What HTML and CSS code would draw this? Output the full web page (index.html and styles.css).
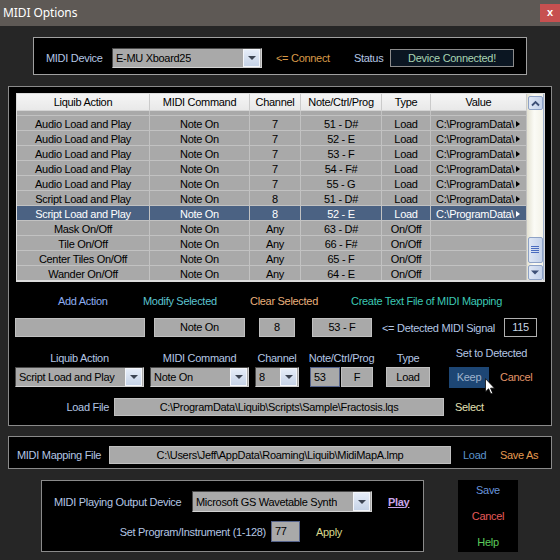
FILE: index.html
```html
<!DOCTYPE html>
<html>
<head>
<meta charset="utf-8">
<title>MIDI Options</title>
<link rel="stylesheet" href="styles.css">
</head>
<body>
<div class="titlebar"><span class="title">MIDI Options</span><span class="close">x</span></div>

<div class="device-panel">
  <span class="dev-lbl">MIDI Device</span>
  <div class="select dev-select"><span>E-MU Xboard25</span><span class="dd"></span></div>
  <span class="connect">&lt;= Connect</span>
  <span class="status-lbl">Status</span>
  <div class="status-box">Device Connected!</div>
</div>

<div class="main-panel">
  <div class="grid">
    <div class="grid-data">
      <div class="row head">
        <div>Liquib Action</div><div>MIDI Command</div><div>Channel</div><div>Note/Ctrl/Prog</div><div>Type</div><div>Value</div>
      </div>
      <div class="rows">
        <div class="row strip"><div></div><div></div><div></div><div></div><div></div><div></div></div>
        <div class="row"><div>Audio Load and Play</div><div>Note On</div><div>7</div><div>51 - D#</div><div>Load</div><div class="val"><span>C:\ProgramData\</span><i class="tri"></i></div></div>
        <div class="row"><div>Audio Load and Play</div><div>Note On</div><div>7</div><div>52 - E</div><div>Load</div><div class="val"><span>C:\ProgramData\</span><i class="tri"></i></div></div>
        <div class="row"><div>Audio Load and Play</div><div>Note On</div><div>7</div><div>53 - F</div><div>Load</div><div class="val"><span>C:\ProgramData\</span><i class="tri"></i></div></div>
        <div class="row"><div>Audio Load and Play</div><div>Note On</div><div>7</div><div>54 - F#</div><div>Load</div><div class="val"><span>C:\ProgramData\</span><i class="tri"></i></div></div>
        <div class="row"><div>Audio Load and Play</div><div>Note On</div><div>7</div><div>55 - G</div><div>Load</div><div class="val"><span>C:\ProgramData\</span><i class="tri"></i></div></div>
        <div class="row"><div>Script Load and Play</div><div>Note On</div><div>8</div><div>51 - D#</div><div>Load</div><div class="val"><span>C:\ProgramData\</span><i class="tri"></i></div></div>
        <div class="row sel"><div>Script Load and Play</div><div>Note On</div><div>8</div><div>52 - E</div><div>Load</div><div class="val"><span>C:\ProgramData\</span><i class="tri"></i></div></div>
        <div class="row"><div>Mask On/Off</div><div>Note On</div><div>Any</div><div>63 - D#</div><div>On/Off</div><div class="val"></div></div>
        <div class="row"><div>Tile On/Off</div><div>Note On</div><div>Any</div><div>66 - F#</div><div>On/Off</div><div class="val"></div></div>
        <div class="row"><div>Center Tiles On/Off</div><div>Note On</div><div>Any</div><div>65 - F</div><div>On/Off</div><div class="val"></div></div>
        <div class="row"><div>Wander On/Off</div><div>Note On</div><div>Any</div><div>64 - E</div><div>On/Off</div><div class="val"></div></div>
      </div>
    </div>
    <div class="vscroll">
      <div class="sb-btn sb-up"><svg width="9" height="7" viewBox="0 0 9 7"><polyline points="1,5.5 4.5,2 8,5.5" fill="none" stroke="#3d4f76" stroke-width="1.8"/></svg></div>
      <div class="sb-space"></div>
      <div class="sb-btn sb-thumb"><svg width="8" height="8" viewBox="0 0 8 8"><g stroke="#4a6cc0" stroke-width="1"><line x1="0" y1="0.5" x2="8" y2="0.5"/><line x1="0" y1="2.5" x2="8" y2="2.5"/><line x1="0" y1="4.5" x2="8" y2="4.5"/><line x1="0" y1="6.5" x2="8" y2="6.5"/></g></svg></div>
      <div class="sb-btn sb-down"><svg width="8" height="5" viewBox="0 0 8 5"><polygon points="0,0.5 8,0.5 4,4.5" fill="#3d4f76"/></svg></div>
    </div>
  </div>

  <div class="links">
    <span class="lk lk-add">Add Action</span>
    <span class="lk lk-mod">Modify Selected</span>
    <span class="lk lk-clr">Clear Selected</span>
    <span class="lk lk-txt">Create Text File of MIDI Mapping</span>
  </div>

  <div class="detect">
    <div class="box b1"></div>
    <div class="box b2">Note On</div>
    <div class="box b3">8</div>
    <div class="box b4">53 - F</div>
    <span class="det-lbl">&lt;= Detected MIDI Signal</span>
    <div class="sig">115</div>
  </div>

  <div class="controls">
    <div class="grp g1"><span class="glbl">Liquib Action</span><div class="select s1"><span>Script Load and Play</span><span class="dd"></span></div></div>
    <div class="grp g2"><span class="glbl">MIDI Command</span><div class="select s2"><span>Note On</span><span class="dd"></span></div></div>
    <div class="grp g3"><span class="glbl">Channel</span><div class="select s3"><span>8</span><span class="dd"></span></div></div>
    <div class="grp g4"><span class="glbl">Note/Ctrl/Prog</span><div class="pair"><div class="inp i53">53</div><div class="box bF">F</div></div></div>
    <div class="grp g5"><span class="glbl">Type</span><div class="box bLoad">Load</div></div>
    <div class="grp g6"><span class="glbl glbl-det">Set to Detected</span><div class="pair"><div class="keep">Keep</div><span class="cancel-lk">Cancel</span></div></div>
  </div>

  <div class="loadrow">
    <span class="lf-lbl">Load File</span>
    <div class="box lf-box">C:\ProgramData\Liquib\Scripts\Sample\Fractosis.lqs</div>
    <span class="select-lk">Select</span>
  </div>
</div>

<div class="map-panel">
  <span class="map-lbl">MIDI Mapping File</span>
  <div class="box map-box">C:\Users\Jeff\AppData\Roaming\Liquib\MidiMapA.lmp</div>
  <span class="map-load">Load</span>
  <span class="map-save">Save As</span>
</div>

<div class="bottom">
  <div class="play-panel">
    <div class="play-row1">
      <span class="out-lbl">MIDI Playing Output Device</span>
      <div class="select s-out"><span>Microsoft GS Wavetable Synth</span><span class="dd"></span></div>
      <span class="play-lk">Play</span>
    </div>
    <div class="play-row2">
      <span class="prog-lbl">Set Program/Instrument (1-128)</span>
      <div class="inp i77">77</div>
      <span class="apply-lk">Apply</span>
    </div>
  </div>
  <div class="save-panel">
    <span class="sv">Save</span>
    <span class="cn">Cancel</span>
    <span class="hp">Help</span>
  </div>
</div>

<svg class="cursor" width="10" height="17" viewBox="0 0 12 20"><path d="M0.5 0.5 L0.5 16.5 L4.3 12.8 L7 19 L9.3 18 L6.7 12 L11.5 12 Z" fill="#fff" stroke="#000" stroke-width="1" stroke-linejoin="round"/></svg>
</body>
</html>
```

FILE: styles.css
```css
* { box-sizing: border-box; }
html, body { margin: 0; padding: 0; }
body {
  width: 560px;
  height: 560px;
  background: #262626;
  font-family: "Liberation Sans", Arial, sans-serif;
  font-size: 11px;
  letter-spacing: -0.3px;
  color: #b4c6e4;
  overflow: hidden;
  position: relative;
}
span { white-space: nowrap; }

/* title bar */
.titlebar {
  height: 26px;
  background: #5e5955;
  display: flex;
  justify-content: space-between;
  align-items: flex-start;
}
.title {
  font-family: "Noto Sans", "Open Sans", sans-serif;
  font-size: 12px;
  letter-spacing: -0.1px;
  color: #ffffff;
  line-height: 25px;
  padding-left: 3px;
}
.close {
  margin-top: 4px;
  width: 20px;
  height: 18px;
  background: #c75050;
  color: #ffffff;
  font-weight: bold;
  font-size: 11px;
  line-height: 16px;
  text-align: center;
  letter-spacing: 0;
}

/* device panel */
.device-panel {
  margin: 11px 0 0 33px;
  width: 494px;
  height: 38px;
  background: #000;
  border: 1px solid #a0a0a0;
  display: flex;
  align-items: center;
  padding: 4px 0 0 12px;
}
.dev-lbl { width: 66px; }
.select {
  display: flex;
  align-items: center;
  justify-content: space-between;
  background: #a9a9a9;
  border: 1px solid;
  border-color: #4a4a4a #d2d2d2 #d2d2d2 #4a4a4a;
  color: #000;
  height: 20px;
  padding: 0 1px 0 3px;
  overflow: hidden;
}
.select > span:first-child { overflow: hidden; }
.dd {
  flex: none;
  width: 17px;
  height: 18px;
  border: 1px solid #f4f6fa;
  background: linear-gradient(#e6edf8, #c6d3e7);
  display: flex;
  align-items: center;
  justify-content: center;
}
.dd::after {
  content: "";
  width: 0;
  height: 0;
  border-left: 4px solid transparent;
  border-right: 4px solid transparent;
  border-top: 4px solid #3c4452;
}
.dev-select { width: 150px; }
.connect { margin-left: 14px; width: 78px; color: #d99a48; }
.status-lbl { width: 36px; }
.status-box {
  width: 124px;
  height: 18px;
  background: #0b1622;
  border: 1px solid #8c8c8c;
  color: #a8d4b2;
  text-align: center;
  line-height: 16px;
}

/* main panel */
.main-panel {
  margin: 11px 0 0 8px;
  width: 544px;
  height: 340px;
  background: #000;
  border: 1px solid #8a8a8a;
}
.grid {
  margin: 6px 0 0 7px;
  width: 529px;
  height: 189px;
  border: 1px solid #dcdcdc;
  border-bottom-width: 2px;
  display: flex;
  background: #a9a9a9;
}
.grid-data { width: 510px; display: flex; flex-direction: column; }
.row {
  display: grid;
  grid-template-columns: 133px 100px 51px 81px 49px 96px;
  height: 15px;
}
.row > div {
  border-right: 1px solid #c2c2c2;
  border-bottom: 1px solid #c2c2c2;
  text-align: center;
  padding-top: 1px;
  line-height: 14px;
  color: #000;
  white-space: nowrap;
  overflow: hidden;
}
.head {
  height: 17px;
  background: linear-gradient(#f5f5f5, #e8e8e8);
}
.head > div {
  padding-top: 0;
  line-height: 16px;
  border-right: 1px solid #cbcbcb;
  border-bottom: 1px solid #d4d4d4;
}
.rows { height: 169px; overflow: hidden; }
.row.strip { height: 5px; }
.row.sel { background: #4b6283; }
.row.sel > div { color: #ffffff; }
.row > div.val { display: flex; align-items: center; text-align: left; }
.val span { flex: 1; padding-left: 5px; }
.tri {
  flex: none;
  width: 0;
  height: 0;
  border-left: 4px solid #000;
  border-top: 3px solid transparent;
  border-bottom: 3px solid transparent;
  margin-right: 6px;
}
.sel .tri { border-left-color: #ffffff; }

/* scrollbar */
.vscroll {
  width: 17px;
  display: flex;
  flex-direction: column;
  align-items: center;
  background: linear-gradient(90deg, #e4e2d2, #fbfbf6 45%, #f3f2e8);
  border-right: 1px solid #9fb0cc;
}
.sb-btn {
  width: 15px;
  border: 1px solid #8ea2c6;
  border-radius: 2px;
  background: linear-gradient(90deg, #dfe7f5, #c3d1ea);
  display: flex;
  align-items: center;
  justify-content: center;
}
.sb-btn svg { display: block; }
.sb-up { height: 14px; margin-top: 2px; }
.sb-space { flex: 1; }
.sb-thumb { height: 26px; margin-bottom: 2px; }
.sb-down { height: 15px; }

/* action links */
.links {
  display: flex;
  margin-top: 12px;
  padding-left: 49px;
  height: 14px;
  line-height: 14px;
}
.lk-add { width: 85px; color: #8cacf0; }
.lk-mod { width: 107px; color: #5cc4d0; }
.lk-clr { width: 101px; color: #e8b07c; }
.lk-txt { color: #3cc8b4; }

/* detected row */
.detect {
  display: flex;
  align-items: center;
  margin-top: 10px;
  height: 19px;
  padding-left: 6px;
}
.box {
  height: 19px;
  background: #a9a9a9;
  border: 1px solid #c0c0c0;
  color: #000;
  text-align: center;
  line-height: 17px;
  white-space: nowrap;
  overflow: hidden;
}
.b1 { width: 130px; }
.b2 { width: 91px; margin-left: 9px; }
.b3 { width: 36px; margin-left: 14px; }
.b4 { width: 60px; margin-left: 17px; }
.det-lbl { width: 122px; margin-left: 10px; }
.sig {
  width: 33px;
  height: 19px;
  border: 1px solid #b0b0b0;
  color: #c8d4e4;
  text-align: center;
  line-height: 17px;
}

/* control row */
.controls {
  display: flex;
  align-items: flex-end;
  margin-top: 9px;
  padding-left: 6px;
}
.grp { display: flex; flex-direction: column; align-items: center; }
.glbl { height: 14px; line-height: 14px; margin-bottom: 2px; }
.glbl-det { margin-bottom: 7px; }
.g1 { width: 129px; }
.g2 { width: 99px; margin-left: 6px; }
.g3 { width: 44px; margin-left: 6px; }
.g4 { width: 63px; margin-left: 11px; }
.g5 { width: 44px; margin-left: 13px; }
.g6 { width: 85px; margin-left: 19px; }
.grp .select { width: 100%; }
.pair { display: flex; align-items: center; width: 100%; height: 20px; }
.inp {
  height: 20px;
  background: #a9a9a9;
  border: 1px solid #56648c;
  color: #000;
  padding-left: 3px;
  line-height: 18px;
}
.i53 { width: 30px; }
.bF { width: 32px; height: 20px; line-height: 18px; margin-left: 1px; }
.bLoad { width: 44px; height: 20px; line-height: 18px; }
.keep {
  width: 40px;
  height: 21px;
  background: #1d4674;
  color: #9fb3cc;
  text-align: center;
  line-height: 21px;
}
.cancel-lk { margin-left: 11px; color: #e2956a; }

/* load file */
.loadrow {
  display: flex;
  align-items: center;
  margin-top: 11px;
  height: 18px;
}
.lf-lbl { width: 100px; text-align: right; }
.lf-box { width: 330px; height: 18px; line-height: 16px; margin-left: 5px; }
.select-lk { margin-left: 11px; color: #e4e0b4; }

/* mapping panel */
.map-panel {
  margin: 10px 0 0 8px;
  width: 544px;
  height: 33px;
  border: 1px solid #8a8a8a;
  background: #000;
  display: flex;
  align-items: center;
  padding: 5px 0 0 8px;
}
.map-lbl { width: 92px; }
.map-box { width: 342px; height: 18px; line-height: 16px; }
.map-load { margin-left: 12px; width: 37px; color: #5c94cc; }
.map-save { color: #e49a50; }

/* bottom */
.bottom { display: flex; margin-top: 11px; }
.play-panel {
  margin-left: 41px;
  width: 383px;
  height: 72px;
  border: 1px solid #8a8a8a;
  background: #000;
  padding: 10px 0 0 12px;
}
.play-row1 { display: flex; align-items: center; height: 21px; }
.out-lbl { width: 138px; }
.s-out { width: 180px; height: 21px; }
.s-out .dd { height: 19px; }
.play-lk {
  margin-left: 16px;
  color: #c8a4e8;
  font-weight: bold;
  text-decoration: underline;
}
.play-row2 { display: flex; align-items: center; margin-top: 9px; height: 21px; }
.prog-lbl { width: 212px; text-align: right; }
.i77 { width: 29px; height: 21px; line-height: 19px; margin-left: 5px; }
.apply-lk { margin-left: 16px; color: #d8d88c; }

.save-panel {
  margin-left: 34px;
  width: 60px;
  height: 72px;
  background: #000;
  display: flex;
  flex-direction: column;
  align-items: center;
  padding-top: 3px;
  gap: 12px;
}
.save-panel span { line-height: 14px; }
.sv { color: #6894dc; }
.cn { color: #e65a5a; }
.hp { color: #5ccc5c; }

.cursor { position: absolute; left: 485px; top: 378px; }
```
